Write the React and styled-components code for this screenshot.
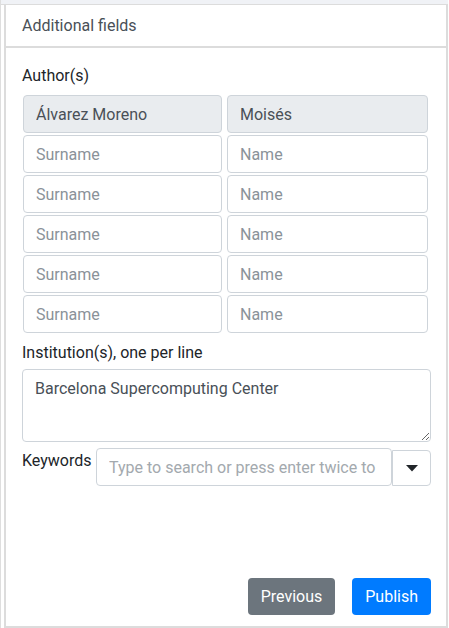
import React from 'react';
import styled, {createGlobalStyle} from 'styled-components';

const GlobalStyle = createGlobalStyle`
    html, body {
        margin: 0;
        padding: 0;
        background: #fff;
        font-family: Roboto, "Liberation Sans", sans-serif;
        color: #212529;
    }
    * {
        box-sizing: border-box;
    }
`;

const Page = styled.div`
    height: 628px;
    display: flex;
    flex-direction: column;
    border-left: 1px solid #dedede;
    padding-left: 3px;
    padding-right: 1px;
`;

const TopStrip = styled.div`
    height: 5px;
    margin-left: -3px;
    background: #f0f2f6;
    border-bottom: 1px solid #dcdcdc;
`;

const Card = styled.div`
    flex: 1;
    display: flex;
    flex-direction: column;
    border-left: 2px solid #dcdcdc;
    border-right: 2px solid #dcdcdc;
    border-bottom: 2px solid #dcdcdc;
`;

const CardHeader = styled.div`
    height: 43px;
    padding: 0 0 0 16px;
    display: flex;
    align-items: center;
    font-size: 16px;
    color: #495057;
    border-bottom: 2px solid #dcdcdc;
`;

const CardBody = styled.div`
    flex: 1;
    display: flex;
    flex-direction: column;
    padding: 16px 15px 11px 16px;
`;

const Label = styled.div`
    font-size: 16px;
    line-height: 24px;
    color: #212529;
    margin-top: ${props => props.top || 0}px;
    margin-bottom: ${props => props.bottom || 0}px;
`;

const AuthorGrid = styled.div`
    display: grid;
    grid-template-columns: 199px 201px;
    column-gap: 5px;
    row-gap: 2px;
    margin-left: 1px;
`;

const TextInput = styled.input`
    height: 38px;
    width: 100%;
    padding: 0 12px;
    font-family: inherit;
    font-size: 16px;
    color: #495057;
    background: ${props => props.disabled ? '#e9ecef' : '#fff'};
    border: 1px solid #ced4da;
    border-radius: 4px;
    outline: none;

    &::placeholder {
        color: #8a9299;
    }
`;

const TextArea = styled.textarea`
    height: 73px;
    width: 100%;
    padding: 7px 12px;
    font-family: inherit;
    font-size: 16px;
    line-height: 24px;
    color: #495057;
    border: 1px solid #ced4da;
    border-radius: 4px;
    outline: none;
    resize: vertical;
    display: block;
`;

const KeywordsRow = styled.div`
    display: flex;
    align-items: flex-start;
    margin-top: 6px;
`;

const KeywordsLabel = styled.div`
    font-size: 16px;
    line-height: 24px;
    margin-top: 1px;
    width: 74px;
    flex-shrink: 0;
`;

const KeywordsInput = styled(TextInput)`
    flex: 1;
    width: auto;
    min-width: 0;
    &::placeholder {
        color: #a3a9ae;
    }
`;

const DropButton = styled.button`
    width: 39px;
    height: 36px;
    margin-top: 2px;
    flex-shrink: 0;
    display: flex;
    align-items: center;
    justify-content: center;
    background: #fff;
    border: 1px solid #ced4da;
    border-radius: 0 4px 4px 0;
    padding: 0;
`;

const Footer = styled.div`
    margin-top: auto;
    display: flex;
    justify-content: flex-end;
    gap: 17px;
`;

const Button = styled.button`
    height: 37px;
    padding: 0 13px;
    font-family: inherit;
    font-size: 16px;
    color: #fff;
    border: none;
    border-radius: 4px;
    background: ${props => props.primary ? '#007bff' : '#6c757d'};
`;

const authors = [
    {surname: 'Álvarez Moreno', name: 'Moisés', locked: true},
    {}, {}, {}, {}, {}
];

const AuthorRow = ({author}) => (
    <>
        <TextInput disabled={author.locked} placeholder="Surname" defaultValue={author.surname}/>
        <TextInput disabled={author.locked} placeholder="Name" defaultValue={author.name}/>
    </>
);

const App = () => {
    return (
        <Page>
            <GlobalStyle/>
            <TopStrip/>
            <Card>
                <CardHeader>Additional fields</CardHeader>
                <CardBody>
                    <Label bottom={7}>Author(s)</Label>
                    <AuthorGrid>
                        {authors.map((a, i) => <AuthorRow key={i} author={a}/>)}
                    </AuthorGrid>

                    <Label top={8} bottom={4}>Institution(s), one per line</Label>
                    <TextArea defaultValue="Barcelona Supercomputing Center"/>

                    <KeywordsRow>
                        <KeywordsLabel>Keywords</KeywordsLabel>
                        <KeywordsInput placeholder="Type to search or press enter twice to add"/>
                        <DropButton>
                            <svg width="12" height="7" viewBox="0 0 12 7">
                                <path d="M0 0 L12 0 L6 6.5 Z" fill="#212529"/>
                            </svg>
                        </DropButton>
                    </KeywordsRow>

                    <Footer>
                        <Button>Previous</Button>
                        <Button primary>Publish</Button>
                    </Footer>
                </CardBody>
            </Card>
        </Page>
    );
};

export default App;
